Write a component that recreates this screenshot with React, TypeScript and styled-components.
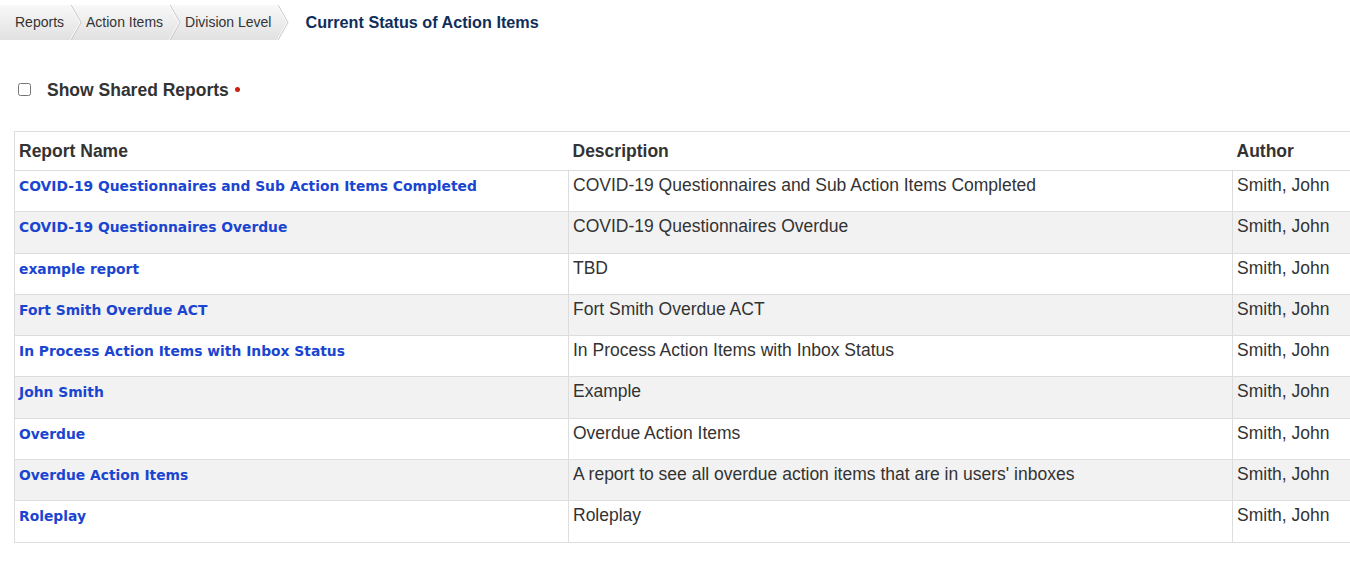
import React from 'react';
import styled, { createGlobalStyle } from 'styled-components';

const GlobalStyle = createGlobalStyle`
  html, body {
    margin: 0;
    padding: 0;
    background: #fff;
    overflow: hidden;
    font-family: "Liberation Sans", Arial, sans-serif;
    color: #333;
  }
`;

const reports = [
  { name: 'COVID-19 Questionnaires and Sub Action Items Completed', description: 'COVID-19 Questionnaires and Sub Action Items Completed', author: 'Smith, John' },
  { name: 'COVID-19 Questionnaires Overdue', description: 'COVID-19 Questionnaires Overdue', author: 'Smith, John' },
  { name: 'example report', description: 'TBD', author: 'Smith, John' },
  { name: 'Fort Smith Overdue ACT', description: 'Fort Smith Overdue ACT', author: 'Smith, John' },
  { name: 'In Process Action Items with Inbox Status', description: 'In Process Action Items with Inbox Status', author: 'Smith, John' },
  { name: 'John Smith', description: 'Example', author: 'Smith, John' },
  { name: 'Overdue', description: 'Overdue Action Items', author: 'Smith, John' },
  { name: 'Overdue Action Items', description: "A report to see all overdue action items that are in users' inboxes", author: 'Smith, John' },
  { name: 'Roleplay', description: 'Roleplay', author: 'Smith, John' },
];

const crumbs = ['Reports', 'Action Items', 'Division Level'];

const Page = styled.div`
  padding-top: 5px;
`;

const Breadcrumb = styled.nav`
  display: flex;
  align-items: center;
  height: 35px;
`;

const Trail = styled.div`
  display: flex;
  align-items: center;
  height: 100%;
  padding: 0 6px 0 15px;
  background: linear-gradient(to bottom, #f8f8f8, #e1e1e1);
`;

const Crumb = styled.a`
  font-size: 14px;
  line-height: 16px;
  margin-top: -2px;
  color: #333;
  text-decoration: none;
  white-space: nowrap;
`;

const Chevron = styled.svg<{ $tip?: boolean }>`
  display: block;
  flex: none;
  margin: ${({ $tip }) => ($tip ? '0 16px 0 0' : '0 4px 0 6px')};
`;

const Current = styled.span`
  font-size: 16.2px;
  line-height: 18px;
  margin-top: -2px;
  font-weight: bold;
  color: #0f2e5a;
  white-space: nowrap;
`;

const SharedRow = styled.label`
  display: flex;
  align-items: center;
  margin: 40px 0 0 18px;
  height: 20px;
  font-size: 17.5px;
  font-weight: bold;
  color: #333;
`;

const Checkbox = styled.input`
  width: 13px;
  height: 13px;
  margin: 0 16px 2px 0;
`;

const RequiredDot = styled.span`
  width: 5px;
  height: 5px;
  border-radius: 50%;
  background: #d02010;
  margin: 0 0 2px 6px;
`;

const Table = styled.table`
  margin: 31px 0 0 14px;
  border-collapse: collapse;
  table-layout: fixed;
  width: 1360px;
`;

const HeadCell = styled.th<{ $first?: boolean }>`
  height: 38px;
  padding: 0 4px;
  text-align: left;
  vertical-align: middle;
  font-size: 17.5px;
  font-weight: bold;
  color: #333;
  border-top: 1px solid #ddd;
  border-bottom: 1px solid #ddd;
  border-left: ${({ $first }) => ($first ? '1px solid #ddd' : 'none')};
`;

const Row = styled.tr<{ $striped: boolean }>`
  background: ${({ $striped }) => ($striped ? '#f2f2f2' : '#fff')};
`;

const Cell = styled.td`
  height: 41.3px;
  box-sizing: border-box;
  padding: 4px 4px 0;
  vertical-align: top;
  line-height: 21px;
  font-size: 17.5px;
  color: #333;
  border: 1px solid #ddd;
  white-space: nowrap;
  overflow: hidden;
`;

const ReportLink = styled.a`
  font-family: "DejaVu Sans", Verdana, sans-serif;
  font-size: 13.85px;
  font-weight: bold;
  color: #1a45d0;
  text-decoration: none;
`;

const ChevronIcon: React.FC<{ tip?: boolean }> = ({ tip }) => (
  <Chevron $tip={tip} width="12" height="35" viewBox="0 0 12 35">
    <defs>
      <linearGradient id="crumbGrad" x1="0" y1="0" x2="0" y2="1">
        <stop offset="0" stopColor="#f8f8f8" />
        <stop offset="1" stopColor="#e1e1e1" />
      </linearGradient>
    </defs>
    {tip && <polygon points="0,0 1,0 11,17.5 1,35 0,35" fill="url(#crumbGrad)" />}
    <polyline points="1,0 11,17.5 1,35" fill="none" stroke="#c4c4c4" strokeWidth="1" />
    <polyline points="0,0 10,17.5 0,35" fill="none" stroke="#ffffff" strokeWidth="1" opacity="0.8" />
  </Chevron>
);

const App: React.FC = () => {
  return (
    <Page>
      <GlobalStyle />
      <Breadcrumb>
        <Trail>
          {crumbs.map((crumb, index) => (
            <React.Fragment key={crumb}>
              <Crumb href="#">{crumb}</Crumb>
              {index < crumbs.length - 1 && <ChevronIcon />}
            </React.Fragment>
          ))}
        </Trail>
        <ChevronIcon tip />
        <Current>Current Status of Action Items</Current>
      </Breadcrumb>

      <SharedRow>
        <Checkbox type="checkbox" />
        Show Shared Reports
        <RequiredDot />
      </SharedRow>

      <Table>
        <colgroup>
          <col style={{ width: 554 }} />
          <col style={{ width: 664 }} />
          <col style={{ width: 142 }} />
        </colgroup>
        <thead>
          <tr>
            <HeadCell $first>Report Name</HeadCell>
            <HeadCell>Description</HeadCell>
            <HeadCell>Author</HeadCell>
          </tr>
        </thead>
        <tbody>
          {reports.map((report, index) => (
            <Row key={report.name} $striped={index % 2 === 1}>
              <Cell>
                <ReportLink href="#">{report.name}</ReportLink>
              </Cell>
              <Cell>{report.description}</Cell>
              <Cell>{report.author}</Cell>
            </Row>
          ))}
        </tbody>
      </Table>
    </Page>
  );
};

export default App;
